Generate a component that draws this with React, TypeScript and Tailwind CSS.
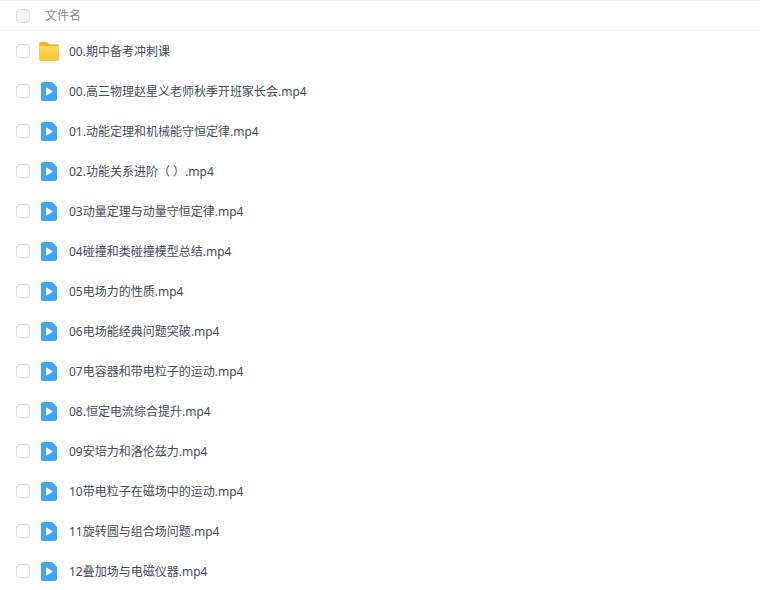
const files = [
  "00.高三物理赵星义老师秋季开班家长会.mp4",
  "01.动能定理和机械能守恒定律.mp4",
  "02.功能关系进阶（ ）.mp4",
  "03动量定理与动量守恒定律.mp4",
  "04碰撞和类碰撞模型总结.mp4",
  "05电场力的性质.mp4",
  "06电场能经典问题突破.mp4",
  "07电容器和带电粒子的运动.mp4",
  "08.恒定电流综合提升.mp4",
  "09安培力和洛伦兹力.mp4",
  "10带电粒子在磁场中的运动.mp4",
  "11旋转圆与组合场问题.mp4",
  "12叠加场与电磁仪器.mp4",
];

function Check({ dim }: { dim?: boolean }) {
  return (
    <span
      className={`block w-[14px] h-[14px] rounded-[4px] border border-[#dcdcdc] ${dim ? "bg-[#f5f5f5]" : "bg-white"}`}
    />
  );
}

function Folder() {
  return (
    <svg width="20" height="19" viewBox="0 0 20 19" className="block">
      <defs>
        <linearGradient id="folderFace" x1="0" y1="0" x2="0" y2="1">
          <stop offset="0" stopColor="#ffd95a" />
          <stop offset="1" stopColor="#fdc631" />
        </linearGradient>
      </defs>
      <path d="M0 2C0 .9.800 0 2 0h5.200c.6 0 1 .2 1.400.6l1.600 1.700H18c1.200 0 2 .8 2 2V7H0z" fill="#f7b52c" />
      <path d="M0 4h20v13c0 1.100-.9 2-2 2H2c-1.100 0-2-.9-2-2z" fill="url(#folderFace)" />
    </svg>
  );
}

function Video() {
  return (
    <svg width="16" height="19" viewBox="0 0 16 19" className="block">
      <path d="M2 0h8.700c.4 0 .7.100 1 .4l3.900 4.100c.3.300.4.600.4 1V17c0 1.100-.9 2-2 2H2c-1.100 0-2-.9-2-2V2C0 .9.900 0 2 0z" fill="#42a5f8" />
      <path d="M5 6.200v6.600c0 .5.500.8 1 .5l5.300-3.300c.4-.3.400-.8 0-1L6 5.700c-.5-.3-1 0-1 .5z" fill="#ffffff" />
    </svg>
  );
}

function Row({ icon, name }: { icon: React.ReactNode; name: string }) {
  return (
    <div className="flex items-center h-[40px]">
      <div className="w-[39px] pl-[16px] shrink-0">
        <Check />
      </div>
      <div className="w-[20px] mr-[10px] shrink-0 flex justify-center">{icon}</div>
      <span className="relative top-[1px] text-[12px] text-[#454d5a] whitespace-nowrap">{name}</span>
    </div>
  );
}

export default function App() {
  return (
    <div
      className="w-[760px] h-[590px] overflow-hidden bg-white"
      style={{ fontFamily: '"Noto Sans", "Noto Sans CJK SC", sans-serif' }}
    >
      <div className="flex items-center h-[31px] border-t border-b border-[#f3f3f3]">
        <div className="w-[45px] pl-[16px] shrink-0">
          <Check dim />
        </div>
        <span className="text-[12px] text-[#888888]">文件名</span>
      </div>
      <Row icon={<Folder />} name="00.期中备考冲刺课" />
      {files.map((f) => (
        <Row key={f} icon={<Video />} name={f} />
      ))}
    </div>
  );
}
